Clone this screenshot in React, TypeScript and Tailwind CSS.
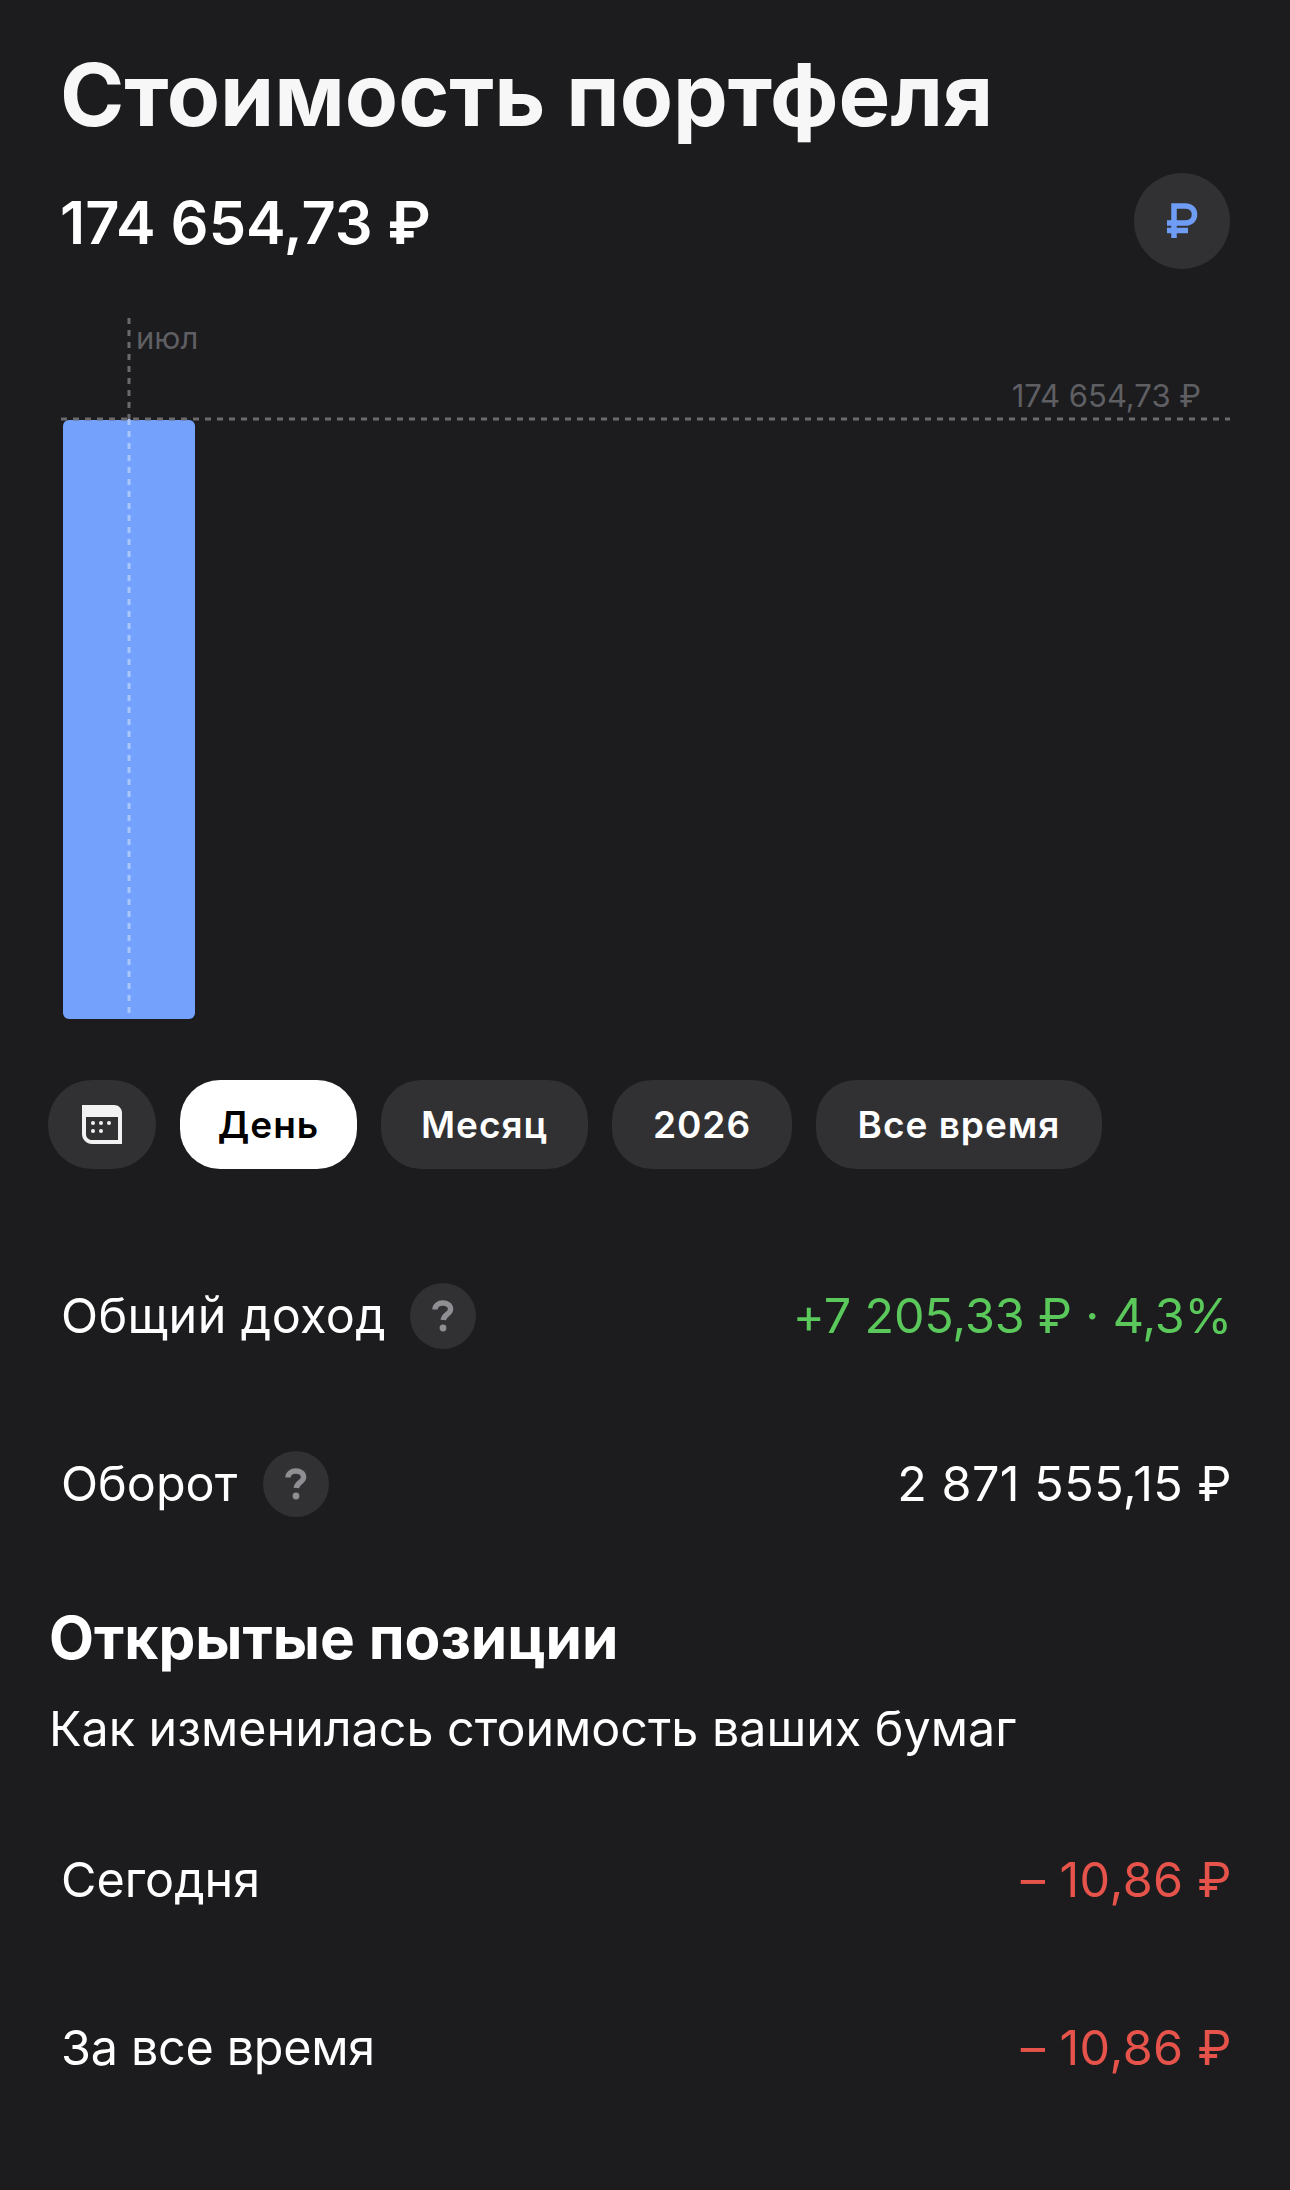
import React from "react";

const Help = () => (
  <span className="flex h-[66px] w-[66px] shrink-0 items-center justify-center rounded-full bg-[#313133]">
    <svg width="22" height="32" viewBox="0 0 22 32" fill="none">
      <path d="M3 9.500C3 5.500 6.400 3 10.800 3C15.200 3 18.600 5.400 18.600 9.200C18.600 14 12 14 11.200 20" stroke="#8e8e93" strokeWidth="5.4" />
      <circle cx="11" cy="28" r="3.4" fill="#8e8e93" />
    </svg>
  </span>
);

const Pill = ({ label, active, w }: { label: string; active?: boolean; w: string }) => (
  <span
    className={`flex h-[89px] items-center justify-center rounded-[40px] text-[37px] font-semibold tracking-[1px] ${w} ${
      active ? "bg-white text-black" : "bg-[#313133] text-white"
    }`}
  >
    {label}
  </span>
);

export default function App() {
  return (
    <div className="h-[2190px] w-[1290px] overflow-hidden bg-[#1c1c1e] font-['Inter',sans-serif] text-white">
      <div className="pl-[60px] pr-[60px] pt-[40px]">
        <h1 className="text-[87px] font-bold leading-[110px] text-[#f7f7f8]">Стоимость портфеля</h1>
        <div className="mt-[23px] flex h-[96px] items-center justify-between">
          <span className="pt-[3px] text-[59.500px] font-semibold">174 654,73 ₽</span>
          <span className="flex h-[96px] w-[96px] items-center justify-center rounded-full bg-[#313133]">
            <svg width="32" height="36" viewBox="0 0 32 36" fill="none" stroke="#6f9df5" strokeWidth="5.500">
              <path d="M8 35V3H19C25 3 28.500 6.500 28.500 11.500C28.500 16.500 25 20 19 20H1" />
              <path d="M1 27.500H22" />
            </svg>
          </span>
        </div>
      </div>

      <div className="relative mx-[61px] mt-[49px] h-[701px] w-[1169px]">
        <div className="absolute bottom-0 left-[2px] h-[599px] w-[132px] rounded-[6px] bg-[#74a1fb]" />
        <svg className="absolute inset-0" width="1169" height="701" fill="none">
          <path d="M68 0V101" stroke="#6a6a6e" strokeWidth="3" strokeDasharray="6 6" />
          <path d="M68 101V701" stroke="#a9c5fc" strokeWidth="3" strokeDasharray="6 6" />
          <path d="M0 101H1169" stroke="#6a6a6e" strokeWidth="3" strokeDasharray="6 6" />
        </svg>
        <span className="absolute left-[75px] top-[2px] text-[31px] leading-[36px] text-[#5f5f63]">июл</span>
        <span className="absolute right-[29px] top-[60px] text-[31px] leading-[36px] text-[#5f5f63]">174 654,73 ₽</span>
      </div>

      <div className="ml-[48px] mt-[61px] flex gap-[24px]">
        <span className="flex h-[89px] w-[108px] items-center justify-center rounded-[44px] bg-[#313133]">
          <svg width="40" height="40" viewBox="0 0 40 40">
            <path d="M0 0H32C36.500 0 40 3.500 40 8V39H10C4.500 39 0 34.500 0 29Z" fill="#f2f2f2" />
            <path d="M4 12H36V35H10C6.500 35 4 32.500 4 29Z" fill="#313133" />
            {[[11, 18], [19, 18], [27, 18], [11, 26], [19, 26]].map(([x, y]) => (
              <circle key={`${x}-${y}`} cx={x} cy={y} r="2" fill="#f2f2f2" />
            ))}
          </svg>
        </span>
        <Pill label="День" active w="w-[177px]" />
        <Pill label="Месяц" w="w-[207px]" />
        <Pill label="2026" w="w-[180px]" />
        <Pill label="Все время" w="w-[286px]" />
      </div>

      <div className="pl-[61px] pr-[58px] pt-[114px] text-[48.500px] leading-[66px]">
        <div className="flex h-[66px] items-center justify-between">
          <span className="flex items-center gap-[24px] tracking-[0.4px]">
            Общий доход
            <Help />
          </span>
          <span className="text-[#5ac85a] tracking-[-0.15px]">+7 205,33 ₽ · 4,3%</span>
        </div>
        <div className="mt-[102px] flex h-[66px] items-center justify-between">
          <span className="flex items-center gap-[26px]">
            Оборот
            <Help />
          </span>
          <span className="tracking-[0.5px]">2 871 555,15 ₽</span>
        </div>
      </div>

      <div className="pl-[49px] pr-[50px] pt-[87px]">
        <h2 className="text-[58.500px] font-bold leading-[68px]">Открытые позиции</h2>
        <p className="mt-[24px] text-[48.400px] leading-[66px]">Как изменилась стоимость ваших бумаг</p>
      </div>

      <div className="pl-[61px] pr-[58px] pt-[85px] text-[48.500px] leading-[66px]">
        <div className="flex h-[66px] items-center justify-between">
          <span>Сегодня</span>
          <span className="text-[#e5534b] tracking-[0.4px]">– 10,86 ₽</span>
        </div>
        <div className="mt-[102px] flex h-[66px] items-center justify-between">
          <span className="tracking-[-0.3px]">За все время</span>
          <span className="text-[#e5534b] tracking-[0.4px]">– 10,86 ₽</span>
        </div>
      </div>
    </div>
  );
}
